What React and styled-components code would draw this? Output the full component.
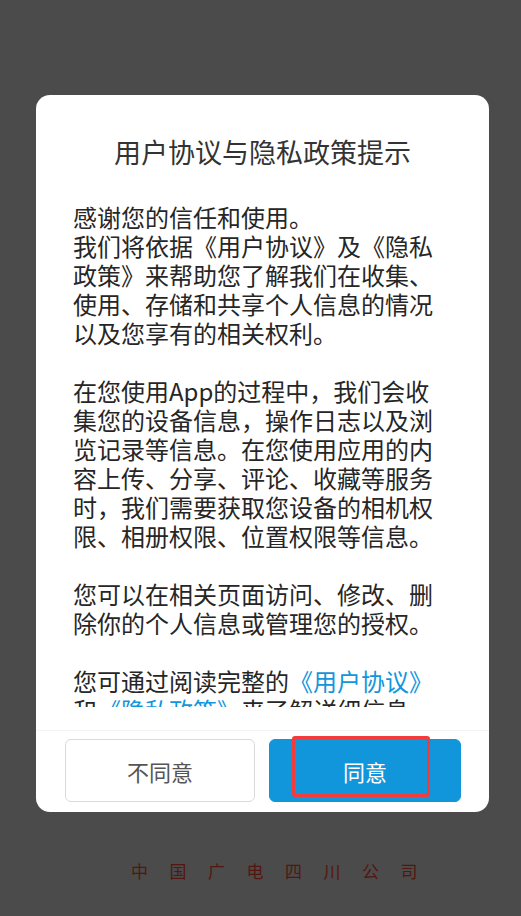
import React from "react";
import styled, { createGlobalStyle } from "styled-components";

const GlobalStyle = createGlobalStyle`
  html, body {
    margin: 0;
    padding: 0;
    background: #4b4b4b;
  }
  body {
    font-family: "Noto Sans CJK SC", "Noto Sans", sans-serif;
  }
`;

const Screen = styled.div`
  width: 521px;
  height: 916px;
  background: #4b4b4b;
  display: flex;
  flex-direction: column;
  overflow: hidden;
`;

const Dialog = styled.div`
  margin: 95px 0 0 36px;
  width: 453px;
  height: 717px;
  background: #fff;
  border-radius: 14px;
  display: flex;
  flex-direction: column;
  box-sizing: border-box;
`;

const Title = styled.h2`
  margin: 0;
  padding-top: 38px;
  font-size: 27px;
  line-height: 38px;
  font-weight: 400;
  color: #333;
  text-align: center;
`;

const Content = styled.div`
  margin-top: 31px;
  height: 505px;
  padding: 0 46px 0 37px;
  overflow-y: auto;
  scrollbar-width: none;
  &::-webkit-scrollbar {
    display: none;
  }
`;

const Para = styled.p`
  margin: 0 0 29px;
  font-size: 24px;
  line-height: 29px;
  color: #262626;
`;

const Link = styled.span`
  color: #1296db;
`;

const Actions = styled.div`
  margin-top: 23px;
  border-top: 1px solid #f4f4f4;
  padding: 8px 28px 0 29px;
  display: grid;
  grid-template-columns: 190px 192px;
  justify-content: space-between;
`;

const Button = styled.button`
  position: relative;
  height: 63px;
  border-radius: 6px;
  font-family: inherit;
  font-size: 22px;
  cursor: pointer;
  border: 1px solid ${(p) => (p.$primary ? "#1296db" : "#dadada")};
  background: ${(p) => (p.$primary ? "#1296db" : "#fff")};
  color: ${(p) => (p.$primary ? "#fff" : "#555")};
`;

// red outline drawn over the primary button in the screenshot
const Highlight = styled.span`
  position: absolute;
  left: 22px;
  top: -4px;
  width: 138px;
  height: 61px;
  border: 3px solid #f43b3b;
  border-radius: 3px;
  box-sizing: border-box;
  pointer-events: none;
`;

const Footer = styled.div`
  margin-top: 49px;
  padding-left: 131px;
  font-family: "Liberation Serif", "Noto Sans CJK SC", serif;
  font-size: 17px;
  line-height: 24px;
  letter-spacing: 21.5px;
  color: #531710;
`;

export default function App() {
  return (
    <Screen>
      <GlobalStyle />
      <Dialog>
        <Title>用户协议与隐私政策提示</Title>
        <Content>
          <Para>
            感谢您的信任和使用。
            <br />
            我们将依据《用户协议》及《隐私政策》来帮助您了解我们在收集、使用、存储和共享个人信息的情况以及您享有的相关权利。
          </Para>
          <Para>
            在您使用App的过程中，我们会收集您的设备信息，操作日志以及浏览记录等信息。在您使用应用的内容上传、分享、评论、收藏等服务时，我们需要获取您设备的相机权限、相册权限、位置权限等信息。
          </Para>
          <Para>您可以在相关页面访问、修改、删除你的个人信息或管理您的授权。</Para>
          <Para>
            您可通过阅读完整的<Link>《用户协议》</Link>和<Link>《隐私政策》</Link>来了解详细信息。
          </Para>
        </Content>
        <Actions>
          <Button>不同意</Button>
          <Button $primary>
            同意
            <Highlight />
          </Button>
        </Actions>
      </Dialog>
      <Footer>中国广电四川公司</Footer>
    </Screen>
  );
}
